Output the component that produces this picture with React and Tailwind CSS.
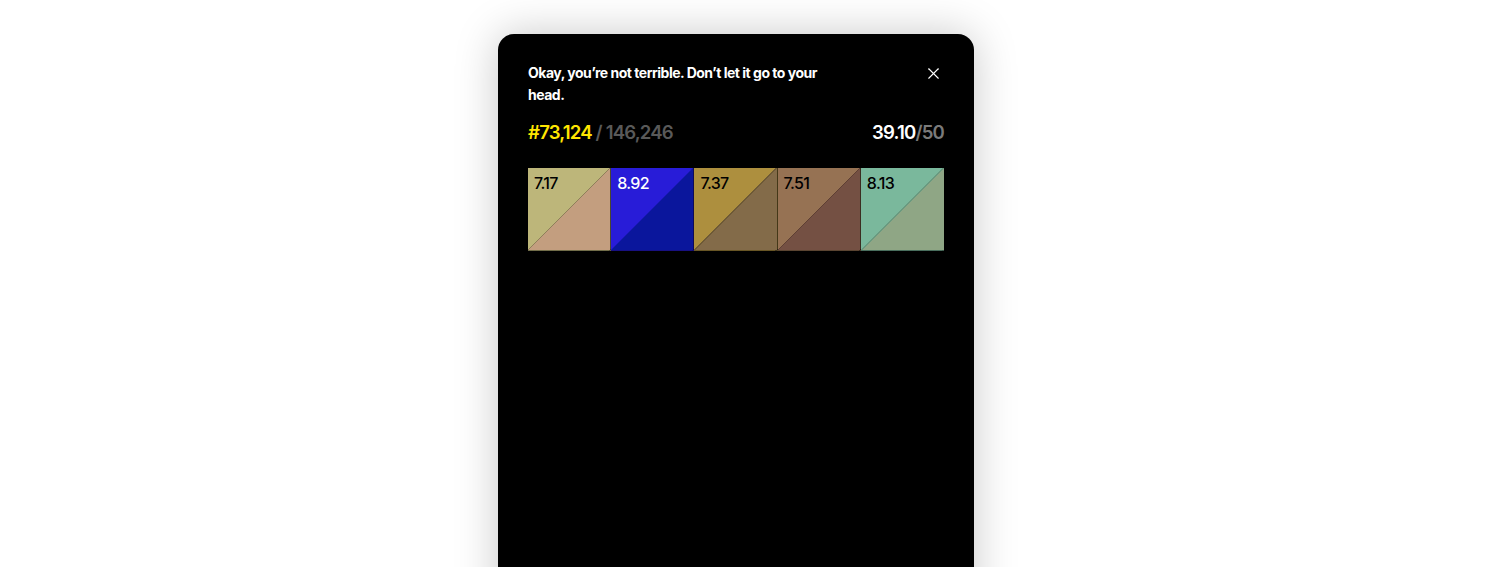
import { X } from "lucide-react"

const scores = [
  { value: "7.17", bg: "bg-[linear-gradient(to_bottom_right,#bdb67a_49.4%,#8f7f5a_49.4%,#8f7f5a_50.6%,#c39e7f_50.6%)]", text: "text-black" },
  { value: "8.92", bg: "bg-[linear-gradient(to_bottom_right,#281cd8_49.4%,#1a18b8_49.4%,#1a18b8_50.6%,#0a169c_50.6%)]", text: "text-white" },
  { value: "7.37", bg: "bg-[linear-gradient(to_bottom_right,#ad8f3e_49.4%,#6e5a36_49.4%,#6e5a36_50.6%,#836b49_50.6%)]", text: "text-black" },
  { value: "7.51", bg: "bg-[linear-gradient(to_bottom_right,#967253_49.4%,#5e3f33_49.4%,#5e3f33_50.6%,#745043_50.6%)]", text: "text-black" },
  { value: "8.13", bg: "bg-[linear-gradient(to_bottom_right,#7ab89c_49.4%,#6a9a80_49.4%,#6a9a80_50.6%,#8fa685_50.6%)]", text: "text-black" },
]

export default function App() {
  return (
    <div className="h-screen overflow-hidden bg-white flex justify-center pr-[30px] pt-[34px] font-['Inter',sans-serif]">
      <div className="w-[476px] h-[620px] shrink-0 bg-black rounded-2xl shadow-[0_0_44px_rgba(0,0,0,0.22)] px-[30px] pt-[28px]">
        <div className="flex items-start justify-between">
          <p className="w-[310px] text-[14px] leading-[22px] font-bold tracking-[-0.035em] text-white">
            Okay, you’re not terrible. Don’t let it go to your head.
          </p>
          <button className="mt-[2px] mr-[1px] text-white">
            <X className="w-[19px] h-[19px]" strokeWidth={1.4} />
          </button>
        </div>

        <div className="mt-[13px] flex items-baseline justify-between text-[18.6px] leading-[26px] font-semibold tracking-[-0.045em]">
          <div>
            <span className="text-[#ffe600]">#73,124</span>
            <span className="text-[#595959]"> / 146,246</span>
          </div>
          <div>
            <span className="text-white">39.10</span>
            <span className="text-[#7a7a7a]">/50</span>
          </div>
        </div>

        <div className="mt-[23px] grid grid-cols-5 h-[83px]">
          {scores.map((s) => (
            <div key={s.value} className={`${s.bg} border-r border-black/60 last:border-r-0 border-b border-b-black/40 px-[6px] pt-[3px]`}>
              <span className={`${s.text} text-[16px] leading-[22px] font-medium tracking-[-0.04em]`}>{s.value}</span>
            </div>
          ))}
        </div>
      </div>
    </div>
  )
}
